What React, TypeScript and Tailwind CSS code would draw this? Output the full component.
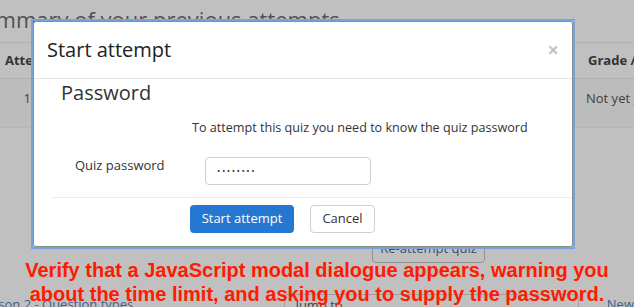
import React from 'react';

const sans = { fontFamily: '"Open Sans", "Noto Sans", sans-serif' };

function BackgroundPage() {
    return (
        <div className="flex flex-col w-full h-full bg-[#c0c0c0] text-[#3b3b3b]">
            <h2 className="shrink-0 ml-[-30px] pt-[5px] h-[42px] text-[22px] leading-[28px] text-[#525252] whitespace-nowrap">
                Summary of your previous attempts
            </h2>
            <div className="shrink-0 flex flex-col border-t border-[#b0b0b0]">
                <div className="flex items-center h-[36px] border-b border-[#b0b0b0] text-[13px] font-bold text-[#333]">
                    <div className="w-[40px] pl-[5px]">Attempt</div>
                    <div className="flex-1" />
                    <div className="w-[46px] whitespace-nowrap">Grade / 10.00</div>
                </div>
                <div className="flex items-center h-[49px] pb-[8px] border-b border-[#b6b6b6] bg-[#bcbcbc] text-[13px] text-[#3f3f3f]">
                    <div className="w-[34px] text-right pr-[3px]">1</div>
                    <div className="flex-1" />
                    <div className="w-[48px] whitespace-nowrap">Not yet graded</div>
                </div>
            </div>
            <div className="shrink-0 ml-[372px] mt-[107px] w-[113px] h-[28px] flex items-center justify-center border border-[#929292] rounded-[4px] text-[13px] text-[#3c4d66]">
                Re-attempt quiz
            </div>
            <div className="shrink-0 flex items-start mt-[31px] text-[13px]">
                <div className="ml-[-22px] w-[307px] pt-[1px] text-[#3d5f8e] whitespace-nowrap">
                    Lesson 2 - Question types
                </div>
                <div className="w-[295px] h-[20px] border border-[#a0a0a0] rounded-[3px] pl-[10px] pt-[1px] text-[#444]">
                    Jump to...
                </div>
                <div className="ml-[28px] pt-[1px] text-[#3d5f8e] whitespace-nowrap">New</div>
            </div>
        </div>
    );
}

function StartAttemptModal() {
    return (
        <div className="absolute left-[31px] top-[19px] w-[544px] h-[230px] border-2 border-[#78a2dd]">
            <div className="flex flex-col w-full h-full bg-white border border-[#8c8c8c] rounded-[3px] text-[#333]">
                <div className="shrink-0 flex items-center justify-between h-[57px] pl-[13px] pr-[13px] border-b border-[#e5e5e5]">
                    <span className="text-[20px] leading-[28px] text-[#222]">Start attempt</span>
                    <span className="text-[20px] font-bold leading-none text-[#c4c4c4]">×</span>
                </div>
                <div className="shrink-0 pl-[27px] text-[20px] leading-[28px] text-[#333]">Password</div>
                <div className="shrink-0 pl-[158px] mt-[12px] text-[12.6px] leading-[18px]">
                    To attempt this quiz you need to know the quiz password
                </div>
                <div className="shrink-0 flex items-start mt-[20px]">
                    <div className="w-[171px] pl-[41px] text-[13px] leading-[16px]">Quiz password</div>
                    <div className="w-[166px] h-[28px] flex items-center pl-[11px] border border-[#cfcfcf] rounded-[4px] text-[9px] tracking-[1.5px] text-[#444]">
                        ••••••••
                    </div>
                </div>
                <div className="shrink-0 ml-[18px] mt-[12px] border-t border-[#eee]" />
                <div className="shrink-0 flex mt-[7px] ml-[156px] gap-[16px] text-[13px]">
                    <button className="w-[104px] h-[28px] rounded-[4px] bg-[#2578d1] text-white">
                        Start attempt
                    </button>
                    <button className="w-[65px] h-[28px] rounded-[4px] border border-[#cfcfcf] bg-white text-[#333]">
                        Cancel
                    </button>
                </div>
            </div>
        </div>
    );
}

export default function App() {
    return (
        <div className="relative w-[634px] h-[307px] overflow-hidden" style={sans}>
            <BackgroundPage />
            <StartAttemptModal />
            <div
                className="absolute left-0 right-0 top-[258px] text-center text-[20px] font-bold leading-[24px] text-[#ff1a00]"
                style={{ fontFamily: '"Liberation Sans", Arial, sans-serif' }}>
                Verify that a JavaScript modal dialogue appears, warning you
                <br />
                about the time limit, and asking you to supply the password.
            </div>
        </div>
    );
}
